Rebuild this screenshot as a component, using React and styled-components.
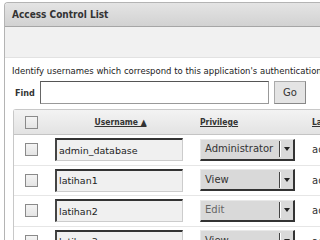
import React from "react";
import styled, { createGlobalStyle } from "styled-components";

const GlobalStyle = createGlobalStyle`
  html, body {
    margin: 0;
    padding: 0;
    background: #ffffff;
    overflow: hidden;
  }
  body {
    font-family: "DejaVu Sans", Verdana, sans-serif;
    color: #222;
  }
`;

const Page = styled.div`
  width: 320px;
  height: 240px;
  overflow: hidden;
  padding: 2px 0 0 4px;
  box-sizing: border-box;
`;

const Panel = styled.div`
  width: 360px;
  height: 260px;
  border: 1px solid #b4b4b4;
  border-right: none;
  border-bottom: none;
  border-radius: 4px 0 0 0;
  overflow: hidden;
`;

const TitleBar = styled.div`
  height: 23px;
  display: flex;
  align-items: center;
  padding-left: 7px;
  background: linear-gradient(#e4e4e4, #d2d2d2);
  border-bottom: 1px solid #a6a6a6;
  font-family: "DejaVu Sans Condensed", "DejaVu Sans", sans-serif;
  font-weight: bold;
  font-size: 10px;
  color: #333;
`;

const Toolbar = styled.div`
  height: 30px;
  background: #f1f1f1;
  border-bottom: 1px solid #e2e2e2;
`;

const Content = styled.div`
  padding: 8px 0 0 7px;
`;

const Intro = styled.p`
  margin: 0;
  font-size: 8.5px;
  line-height: 11px;
  white-space: nowrap;
  color: #222;
`;

const FindRow = styled.div`
  display: flex;
  align-items: center;
  margin-top: 4px;
  height: 23px;
`;

const FindLabel = styled.label`
  font-family: "DejaVu Sans Condensed", "DejaVu Sans", sans-serif;
  font-weight: bold;
  font-size: 9px;
  width: 25px;
  padding-left: 3px;
  color: #333;
`;

const FindInput = styled.input`
  width: 229px;
  height: 23px;
  box-sizing: border-box;
  border: 1px solid #999;
  border-top-color: #555;
  border-left-color: #666;
  background: #fff;
  margin: 0;
  padding: 0 3px;
`;

const GoButton = styled.button`
  margin-left: 5px;
  width: 32px;
  height: 23px;
  box-sizing: border-box;
  border: 1px solid #aaa;
  border-right-color: #888;
  border-bottom-color: #888;
  background: #e4e4e4;
  font-family: "DejaVu Sans", sans-serif;
  font-size: 10px;
  color: #333;
  padding: 0;
`;

const Table = styled.div`
  margin-top: 5px;
  margin-left: 1px;
  border-left: 1px solid #c8c8c8;
  border-top: 1px solid #c8c8c8;
  border-radius: 3px 0 0 0;
`;

const Row = styled.div`
  display: grid;
  grid-template-columns: 34px 145px 112px 1fr;
  align-items: center;
  height: ${({ $head }) => ($head ? "24px" : "29.5px")};
  border-bottom: 1px solid ${({ $head }) => ($head ? "#c4c4c4" : "#e6e6e6")};
  background: ${({ $head }) =>
    $head ? "linear-gradient(#f3f3f3, #e3e3e3)" : "#fff"};
`;

const Cell = styled.div`
  display: flex;
  align-items: center;
  justify-content: ${({ $center }) => ($center ? "center" : "flex-start")};
  padding-left: ${({ $pad }) => $pad || 0}px;
  font-size: 9px;
  white-space: nowrap;
  overflow: hidden;
`;

const HeadLink = styled.span`
  font-family: "DejaVu Sans Condensed", "DejaVu Sans", sans-serif;
  font-weight: bold;
  font-size: 8.5px;
  text-decoration: underline;
  color: #333;
`;

const Check = styled.span`
  display: inline-block;
  width: 11px;
  height: 11px;
  border: 1px solid #8a8a8a;
  background: linear-gradient(#f4f4f4, #e4e4e4);
`;

const NameBox = styled.div`
  width: 128px;
  height: 23px;
  box-sizing: border-box;
  display: flex;
  align-items: center;
  padding-left: 2px;
  border: 1px solid #ccc;
  border-top: 2px solid #333;
  border-left: 2px solid #444;
  background: #f0f0f0;
  font-family: "DejaVu Sans", sans-serif;
  font-size: 9.5px;
  color: #222;
`;

const Select = styled.div`
  width: 95px;
  height: 22px;
  box-sizing: border-box;
  display: flex;
  align-items: center;
  border: 1px solid #e8e8e8;
  border-right: 2px solid #333;
  border-bottom: 2px solid #333;
  background: #d9d9d9;
  font-family: "DejaVu Sans", sans-serif;
  font-size: 10px;
  color: ${({ $muted }) => ($muted ? "#666" : "#333")};
`;

const SelectText = styled.span`
  flex: 1;
  padding-left: 4px;
  border-right: 1px solid #444;
  height: 16px;
  line-height: 16px;
  box-shadow: 1px 0 0 #fff;
`;

const Arrow = styled.span`
  width: 13px;
  display: flex;
  justify-content: center;
  &::after {
    content: "";
    border-left: 3px solid transparent;
    border-right: 3px solid transparent;
    border-top: 4px solid #222;
  }
`;

const Status = styled.span`
  font-size: 10px;
  color: #333;
`;

const users = [
  { name: "admin_database", role: "Administrator" },
  { name: "latihan1", role: "View" },
  { name: "latihan2", role: "Edit", muted: true },
  { name: "latihan3", role: "View" },
];

export default function App() {
  return (
    <Page>
      <GlobalStyle />
      <Panel>
        <TitleBar>Access Control List</TitleBar>
        <Toolbar />
        <Content>
          <Intro>
            Identify usernames which correspond to this application's
            authentication
          </Intro>
          <FindRow>
            <FindLabel>Find</FindLabel>
            <FindInput />
            <GoButton>Go</GoButton>
          </FindRow>
          <Table>
            <Row $head>
              <Cell $center>
                <Check />
              </Cell>
              <Cell $center>
                <HeadLink>Username ▲</HeadLink>
              </Cell>
              <Cell $pad={7}>
                <HeadLink>Privilege</HeadLink>
              </Cell>
              <Cell $pad={7}>
                <HeadLink>Last</HeadLink>
              </Cell>
            </Row>
            {users.map((u) => (
              <Row key={u.name}>
                <Cell $center>
                  <Check />
                </Cell>
                <Cell $pad={7}>
                  <NameBox>{u.name}</NameBox>
                </Cell>
                <Cell $pad={7}>
                  <Select $muted={u.muted}>
                    <SelectText>{u.role}</SelectText>
                    <Arrow />
                  </Select>
                </Cell>
                <Cell $pad={7}>
                  <Status>active</Status>
                </Cell>
              </Row>
            ))}
          </Table>
        </Content>
      </Panel>
    </Page>
  );
}
